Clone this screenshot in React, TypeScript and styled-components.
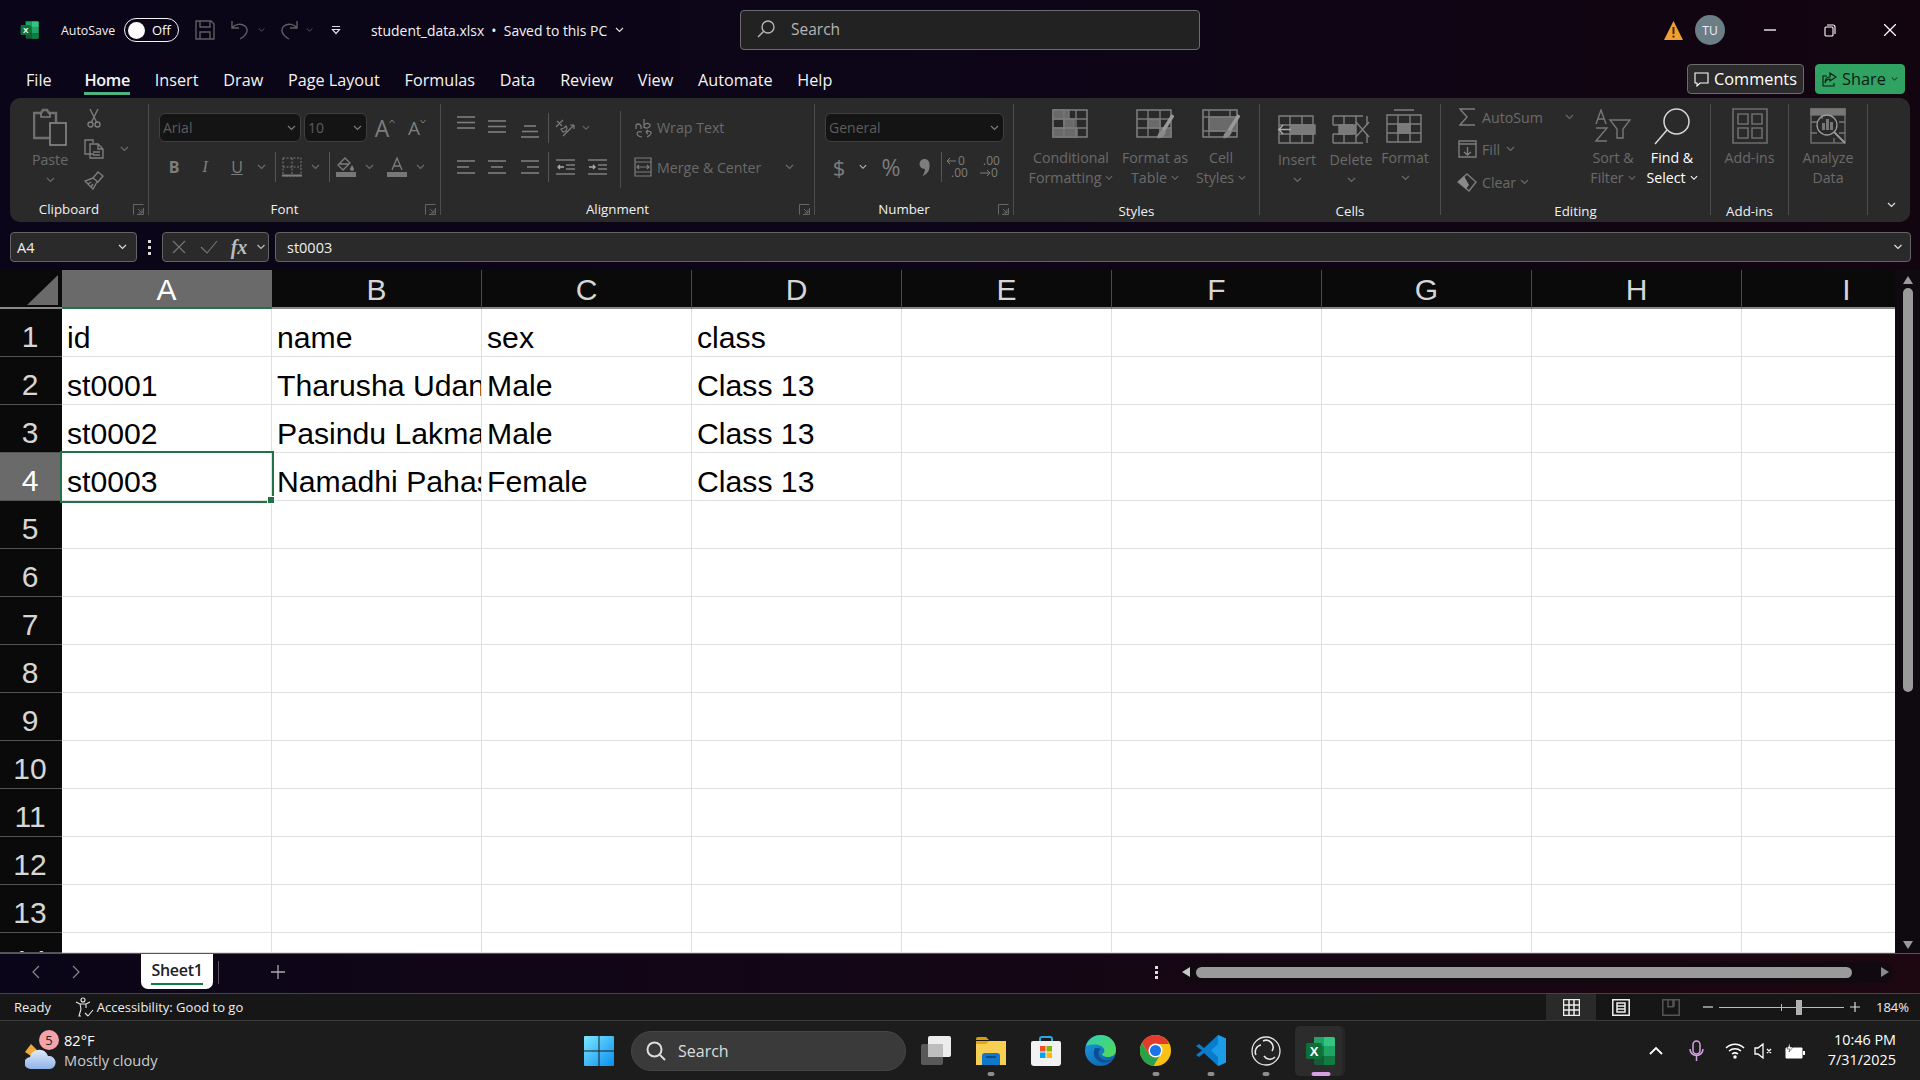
import React from "react";
import styled, { createGlobalStyle } from "styled-components";

const GlobalStyle = createGlobalStyle`
  html, body { margin: 0; padding: 0; background: #000; }
  body { width: 1920px; height: 1080px; overflow: hidden; font-family: "Open Sans", "Noto Sans", sans-serif; }
  * { box-sizing: border-box; }
`;

const DIM = "#7d7d7d";
const MUTED = "#6a6a6a";

const Window = styled.div`
  width: 1920px;
  height: 1080px;
  display: flex;
  flex-direction: column;
`;
const Top = styled.div`
  background: linear-gradient(90deg, #0b0519 0%, #0d0518 50%, #130510 100%);
  color: #fff;
`;
const TitleBar = styled.div`
  height: 60px;
  display: grid;
  grid-template-columns: 740px 460px 1fr;
  align-items: center;
`;
const Cluster = styled.div<{ $pad?: number; $end?: boolean }>`
  display: flex;
  align-items: center;
  padding-left: ${(p) => p.$pad || 0}px;
  justify-content: ${(p) => (p.$end ? "flex-end" : "flex-start")};
`;
const Slot = styled.div<{ $w: number; $ml?: number; $h?: number; $left?: boolean }>`
  width: ${(p) => p.$w}px;
  margin-left: ${(p) => p.$ml || 0}px;
  ${(p) => (p.$h ? `height: ${p.$h}px;` : "")}
  flex: none;
  display: flex;
  align-items: center;
  justify-content: ${(p) => (p.$left ? "flex-start" : "center")};
  white-space: nowrap;
`;
const Glyph = styled.svg<{ $c?: string; $sw?: number }>`
  fill: none;
  stroke: ${(p) => p.$c || DIM};
  stroke-width: ${(p) => p.$sw || 1.4};
  flex: none;
  display: block;
`;
const TitleText = styled.span<{ $size?: number }>`
  font-size: ${(p) => p.$size || 13.9}px;
  color: #f2f2f2;
`;
const Toggle = styled.div`
  width: 55px;
  height: 24px;
  border: 1.5px solid #f4f4f4;
  border-radius: 12px;
  display: flex;
  align-items: center;
  padding-left: 3px;
  gap: 7px;
  font-size: 13px;
`;
const Knob = styled.div`
  width: 17px;
  height: 17px;
  border-radius: 50%;
  background: #fff;
`;
const SearchBox = styled.div`
  height: 40px;
  background: #222;
  border: 1px solid #6c6c6c;
  border-radius: 4px;
  display: flex;
  align-items: center;
  padding: 0 0 2px 16px;
  gap: 16px;
  font-size: 15.5px;
  color: #b5b5b5;
`;
const Avatar = styled.div`
  width: 30px;
  height: 30px;
  border-radius: 50%;
  background: #6b7d85;
  font-size: 12px;
  display: flex;
  align-items: center;
  justify-content: center;
  color: #eef;
  margin: 0 15px 0 12px;
`;
const TabRow = styled.div`
  height: 38px;
  display: flex;
  padding: 0 15px 0 26px;
  gap: 24.8px;
`;
const Tab = styled.div<{ $active?: boolean }>`
  height: 35px;
  padding-top: 5px;
  font-size: 16.2px;
  line-height: 30px;
  white-space: nowrap;
  color: #f4f4f4;
  font-weight: ${(p) => (p.$active ? 600 : 400)};
  letter-spacing: ${(p) => (p.$active ? "-0.3px" : "0")};
  border-bottom: 3px solid ${(p) => (p.$active ? "#4fb27f" : "transparent")};
  margin-left: ${(p) => (p.$active ? 8 : 0)}px;
`;
const TabActions = styled.div`
  margin-left: auto;
  display: flex;
  gap: 11px;
  padding-top: 4px;
`;
const ActionBtn = styled.div<{ $green?: boolean }>`
  height: 30px;
  width: ${(p) => (p.$green ? 90 : 117)}px;
  border-radius: 4px;
  font-size: 16.3px;
  display: flex;
  align-items: center;
  justify-content: center;
  gap: 5px;
  color: ${(p) => (p.$green ? "#0b1a10" : "#fff")};
  background: ${(p) => (p.$green ? "#30a362" : "#2b2b2b")};
  border: 1px solid ${(p) => (p.$green ? "#30a362" : "#6c6c6c")};
`;
const Ribbon = styled.div`
  margin: 0 10px;
  height: 124px;
  background: #2a2a2a;
  border-radius: 10px;
  display: flex;
  padding: 6px 0 7px;
`;
const Group = styled.div<{ $w: number; $last?: boolean }>`
  width: ${(p) => p.$w}px;
  flex: none;
  height: 111px;
  display: flex;
  flex-direction: column;
  border-right: ${(p) => (p.$last ? "none" : "1px solid #4d4d4d")};
`;
const GroupBody = styled.div<{ $pl?: number }>`
  flex: 1;
  min-height: 0;
  display: flex;
  padding-left: ${(p) => p.$pl || 0}px;
`;
const GroupFoot = styled.div<{ $low?: boolean }>`
  height: 20px;
  flex: none;
  display: flex;
  align-items: center;
  margin-bottom: ${(p) => (p.$low ? -6 : -4)}px;
  font-size: 13.3px;
  color: #f0f0f0;
`;
const FootLabel = styled.div`
  flex: 1;
  text-align: center;
`;
const CollapseWrap = styled.div`
  flex: 1;
  display: flex;
  justify-content: flex-end;
  align-items: flex-end;
  padding: 0 12px 7px 0;
`;
const Launcher = styled.div`
  width: 20px;
  flex: none;
  display: flex;
  justify-content: center;
`;
const Large = styled.div<{ $w: number; $on?: boolean }>`
  width: ${(p) => p.$w}px;
  flex: none;
  display: flex;
  flex-direction: column;
  align-items: center;
  font-size: 14.2px;
  line-height: 20px;
  white-space: nowrap;
  color: ${(p) => (p.$on ? "#fff" : MUTED)};
`;
const LargeIcon = styled.div<{ $drop?: boolean }>`
  height: ${(p) => (p.$drop ? 46 : 44)}px;
  flex: none;
  display: flex;
  align-items: center;
  justify-content: center;
`;
const LargeLine = styled.div`
  height: 20px;
  display: flex;
  align-items: center;
  gap: 4px;
`;
const Stack = styled.div<{ $w?: number; $pt?: number; $gap?: number }>`
  display: flex;
  flex-direction: column;
  ${(p) => (p.$w ? `width: ${p.$w}px; flex: none;` : "")}
  padding-top: ${(p) => p.$pt || 0}px;
  gap: ${(p) => p.$gap || 0}px;
`;
const Row = styled.div<{ $h?: number; $w?: number }>`
  display: flex;
  align-items: center;
  height: ${(p) => p.$h || 30}px;
  ${(p) => (p.$w ? `width: ${p.$w}px;` : "")}
`;
const Select = styled.div<{ $w: number; $ml?: number }>`
  width: ${(p) => p.$w}px;
  height: 29px;
  margin-left: ${(p) => p.$ml || 0}px;
  background: #141414;
  border: 1px solid #3f3f3f;
  border-radius: 6px;
  color: #5c5c5c;
  font-size: 14px;
  display: flex;
  align-items: center;
  justify-content: space-between;
  padding: 0 4px 0 3px;
`;
const VRule = styled.div<{ $h?: number }>`
  width: 1px;
  height: ${(p) => p.$h || 30}px;
  background: #555;
  flex: none;
`;
const RuleBlock = styled.div`
  width: 1px;
  height: 77px;
  background: #4d4d4d;
  margin-top: 7px;
  flex: none;
`;
const SmallText = styled.span<{ $ml?: number }>`
  font-size: 14.2px;
  color: ${MUTED};
  margin-left: ${(p) => p.$ml || 0}px;
  white-space: nowrap;
`;
const BoldLetter = styled.span<{ $italic?: boolean; $bold?: boolean; $under?: boolean; $size?: number; $serif?: boolean; $light?: boolean }>`
  font-family: ${(p) => (p.$serif ? '"Liberation Serif", serif' : '"Open Sans", sans-serif')};
  font-size: ${(p) => p.$size || 14}px;
  font-weight: ${(p) => (p.$bold ? 700 : 400)};
  font-style: ${(p) => (p.$italic ? "italic" : "normal")};
  text-decoration: ${(p) => (p.$under ? "underline" : "none")};
  color: ${(p) => (p.$light ? "#bbb" : DIM)};
`;
const FormulaBar = styled.div`
  height: 48px;
  display: flex;
  align-items: center;
  padding: 2px 9px 0 10px;
  font-size: 14.5px;
  color: #eee;
`;
const FxBox = styled.div<{ $w?: number; $grow?: boolean; $ml?: number }>`
  height: 30px;
  background: #2a2a2a;
  border: 1px solid #646464;
  border-radius: 4px;
  display: flex;
  align-items: center;
  ${(p) => (p.$w ? `width: ${p.$w}px; flex: none;` : "")}
  ${(p) => (p.$grow ? "flex: 1;" : "")}
  margin-left: ${(p) => p.$ml || 0}px;
`;
const Dots = styled.div`
  width: 25px;
  flex: none;
  display: flex;
  flex-direction: column;
  align-items: center;
  gap: 3px;
`;
const Dot = styled.div`
  width: 3px;
  height: 3px;
  background: #ddd;
`;
const Sheet = styled.div`
  height: 683px;
  display: flex;
  background: #120a12;
`;
const SheetClip = styled.div`
  width: 1895px;
  flex: none;
  overflow: hidden;
  background: #fff;
`;
const Grid = styled.div`
  display: grid;
  grid-template-columns: 62px repeat(9, 210px);
  grid-template-rows: 39px repeat(13, 48px) 20px;
  width: 1952px;
  font-family: "Liberation Sans", Arial, sans-serif;
`;
const Corner = styled.div`
  background: #0a0a0a;
  border-bottom: 2px solid #8a8a8a;
  display: flex;
  align-items: flex-start;
  padding: 5px 0 0 27px;
`;
const ColHead = styled.div<{ $sel?: boolean }>`
  background: ${(p) => (p.$sel ? "#6a6a6a" : "#0a0a0a")};
  color: ${(p) => (p.$sel ? "#fff" : "#d6d6d6")};
  border-right: 1px solid ${(p) => (p.$sel ? "#6a6a6a" : "#4a4a4a")};
  border-bottom: 2px solid ${(p) => (p.$sel ? "#217346" : "#8a8a8a")};
  font-size: 30px;
  line-height: 39px;
  text-align: center;
`;
const RowHead = styled.div<{ $sel?: boolean }>`
  background: ${(p) => (p.$sel ? "#6a6a6a" : "#0a0a0a")};
  color: ${(p) => (p.$sel ? "#fff" : "#d6d6d6")};
  border-bottom: 1px solid #555;
  font-size: 30px;
  line-height: 47px;
  text-align: center;
  padding: 4px 2px 0 0;
  overflow: hidden;
`;
const Cell = styled.div<{ $sel?: boolean }>`
  background: #fff;
  color: #000;
  border-right: 1px solid #dfdfdf;
  border-bottom: 1px solid #dfdfdf;
  font-size: 30.2px;
  line-height: 47px;
  padding: 5px 0 0 5px;
  white-space: nowrap;
  overflow: hidden;
  ${(p) =>
    p.$sel &&
    `
    overflow: visible;
    position: relative;
    z-index: 2;
    outline: 2.5px solid #217346;
    &::after {
      content: "";
      position: absolute;
      right: -4px;
      bottom: -4px;
      width: 6px;
      height: 6px;
      background: #217346;
      border: 1px solid #fff;
    }
  `}
`;
const VScroll = styled.div`
  flex: 1;
  display: flex;
  flex-direction: column;
  align-items: center;
  padding: 6px 0 0;
  background: #0e0a10;
`;
const VThumb = styled.div`
  width: 10px;
  height: 404px;
  margin-top: 4px;
  background: #9a9a9a;
  border-radius: 5px;
`;
const SheetBar = styled.div`
  height: 41px;
  display: flex;
  align-items: center;
  padding-bottom: 3px;
  border-top: 1px solid #555;
  border-bottom: 1px solid #444;
  background: linear-gradient(90deg, #0b0519 0%, #150615 55%, #1d0710 100%);
`;
const SheetTab = styled.div`
  width: 72px;
  height: 35px;
  margin-left: 53px;
  align-self: flex-start;
  background: #fff;
  color: #222;
  font-size: 16px;
  font-weight: 600;
  border-radius: 0 0 7px 7px;
  display: flex;
  justify-content: center;
`;
const SheetTabText = styled.div`
  height: 31px;
  line-height: 33px;
  border-bottom: 2px solid #107c41;
  letter-spacing: -0.3px;
`;
const HTrack = styled.div`
  width: 711px;
  height: 21px;
  border-radius: 10px;
  background: #100a10;
  display: flex;
  align-items: center;
  margin-left: 15px;
  margin-right: 28px;
`;
const HThumb = styled.div`
  width: 656px;
  height: 11px;
  margin-left: 6px;
  border-radius: 6px;
  background: #9a9a9a;
`;
const StatusBar = styled.div`
  height: 26px;
  background: #161616;
  color: #eee;
  font-size: 13px;
  display: flex;
  align-items: center;
  padding-left: 14px;
`;
const ViewBtn = styled.div<{ $on?: boolean }>`
  width: 50px;
  height: 26px;
  background: ${(p) => (p.$on ? "#2a2a2a" : "transparent")};
  display: flex;
  align-items: center;
  justify-content: center;
  flex: none;
`;
const Slider = styled.div`
  width: 125px;
  height: 1px;
  background: #bbb;
  position: relative;
  flex: none;
`;
const SliderTick = styled.div`
  position: absolute;
  left: 62px;
  top: -3px;
  width: 1px;
  height: 7px;
  background: #bbb;
`;
const SliderThumb = styled.div`
  position: absolute;
  left: 77px;
  top: -7px;
  width: 6px;
  height: 15px;
  background: #b0b0b0;
`;
const Taskbar = styled.div`
  height: 60px;
  background: #1c1c1c;
  border-top: 1px solid #3a3a3a;
  display: flex;
  align-items: center;
  color: #fff;
`;
const Weather = styled.div`
  width: 584px;
  flex: none;
  padding-left: 25px;
  display: flex;
  align-items: center;
  gap: 8px;
  font-size: 14.6px;
  line-height: 20px;
  padding-bottom: 2px;
`;
const WeatherIcon = styled.div`
  position: relative;
  width: 31px;
  height: 40px;
  display: flex;
  align-items: flex-end;
`;
const Badge = styled.div`
  position: absolute;
  left: 14px;
  top: 0;
  width: 20px;
  height: 20px;
  border-radius: 50%;
  background: #f4a3ab;
  color: #222;
  font-size: 13px;
  line-height: 20px;
  text-align: center;
`;
const Sub = styled.div`
  color: #ccc;
`;
const TaskSearch = styled.div`
  width: 275px;
  height: 40px;
  flex: none;
  margin-left: 17px;
  border-radius: 20px;
  background: #3a3a3a;
  border: 1px solid #464646;
  display: flex;
  align-items: center;
  gap: 12px;
  padding-left: 14px;
  font-size: 16px;
  color: #ddd;
`;
const TaskItem = styled.div<{ $first?: boolean }>`
  position: relative;
  width: 55px;
  height: 50px;
  flex: none;
  margin-left: ${(p) => (p.$first ? 2 : 0)}px;
  display: flex;
  align-items: center;
  justify-content: center;
`;
const TaskActive = styled.div`
  position: absolute;
  left: 2px;
  right: 6px;
  top: 0;
  bottom: 0;
  border-radius: 5px;
  background: #2c2c2c;
  box-shadow: 3px 0 0 #262626;
`;
const TaskLogo = styled.div`
  position: relative;
  display: flex;
`;
const Pip = styled.div<{ $on?: boolean }>`
  position: absolute;
  bottom: 0;
  left: 50%;
  width: ${(p) => (p.$on ? 19 : 7)}px;
  height: 3.5px;
  border-radius: 2px;
  transform: translateX(-50%);
  background: ${(p) => (p.$on ? "#d7a0e2" : "#8d8d8d")};
`;
const Clock = styled.div`
  width: 80px;
  margin-left: auto;
  margin-right: 24px;
  padding-bottom: 2px;
  text-align: right;
  font-size: 14.4px;
  line-height: 20px;
  white-space: nowrap;
  display: flex;
  flex-direction: column;
  align-items: flex-end;
`;

const Chev = ({ c = DIM, w = 9 }: { c?: string; w?: number }) => (
  <Glyph width={w} height={6} viewBox="0 0 9 6" $c={c} $sw={1.2}>
    <path d="M1 1l3.5 3.5L8 1" />
  </Glyph>
);
const Corner45 = () => (
  <Glyph width={11} height={11} viewBox="0 0 11 11" $c="#666" $sw={1}>
    <path d="M.5 10.5V.5h10M5 5l4 4M9 5.5V9H5.5" />
    <path d="M10.500 4v6.500H4" />
  </Glyph>
);

function ExcelLogo({ size }: { size: number }) {
  return (
    <svg width={size} height={size} viewBox="0 0 32 32">
      <path d="M9 2h10v9H9z" fill="#21a366" />
      <path d="M19 2h9a2 2 0 0 1 2 2v7H19z" fill="#33c481" />
      <path d="M9 11h10v10H9z" fill="#107c41" />
      <path d="M19 11h11v10H19z" fill="#21a366" />
      <path d="M9 21h21v7a2 2 0 0 1-2 2H11a2 2 0 0 1-2-2z" fill="#185c37" />
      <path d="M19 21h11v7a2 2 0 0 1-2 2h-9z" fill="#107c41" />
      <rect x="1" y="8" width="16" height="16" rx="1.5" fill="#0e6f3b" />
      <text x="9" y="21" textAnchor="middle" fontSize="13" fontWeight="700" fontFamily="Liberation Sans" fill="#fff">X</text>
    </svg>
  );
}
const SaveIcon = () => (
  <Glyph width={20} height={20} viewBox="0 0 20 20" $c="#5f5f5f">
    <path d="M1 1h15l3 3v15H1zM5 1v6h10V1M5 19v-7h10v7" />
  </Glyph>
);
const UndoIcon = ({ flip }: { flip?: boolean }) => (
  <Glyph width={19} height={20} viewBox="0 0 19 20" $c="#5f5f5f" style={flip ? { transform: "scaleX(-1)" } : undefined}>
    <path d="M1 1v7h7M1 8c3-4 9-5 13-2 4 4 2 9-5 13" />
  </Glyph>
);
const SearchGlass = ({ c = "#b5b5b5", s = 18 }: { c?: string; s?: number }) => (
  <Glyph width={s} height={s} viewBox="0 0 18 18" $c={c}>
    <circle cx="11" cy="7" r="6" />
    <path d="M6.500 11.500L1 17" />
  </Glyph>
);
const PasteIcon = () => (
  <Glyph width={34} height={38} viewBox="0 0 34 38" $c="#7c7c7c" $sw={1.6}>
    <path d="M16 30H1V5h7l2-3h4l2 3h7v9" strokeWidth="2.500" stroke="#6f6f6f" />
    <path d="M8 5v4h9V5" />
    <rect x="17" y="15" width="16" height="22" stroke="#8a8a8a" />
  </Glyph>
);
const CutIcon = () => (
  <Glyph width={14} height={20} viewBox="0 0 14 20">
    <path d="M3 1l6.500 13M11 1L4.500 14" />
    <circle cx="3.500" cy="16.500" r="2.500" />
    <circle cx="10.500" cy="16.500" r="2.500" />
  </Glyph>
);
const CopyIcon = () => (
  <Glyph width={20} height={20} viewBox="0 0 20 20">
    <path d="M10 15H1V1h8v3" />
    <path d="M6 5h8l5 5v9H6zM14 5v5h5M9 13h7M9 16h7" />
  </Glyph>
);
const PainterIcon = () => (
  <Glyph width={20} height={19} viewBox="0 0 20 19">
    <path d="M14 1l5 4-5 6-5-4zM9 7L1 10l8 8 4-7" />
    <path d="M4 13l3-2M7 16l2-3" />
  </Glyph>
);
const BigA = ({ up, s }: { up: boolean; s: number }) => (
  <>
    <BoldLetter $size={s}>A</BoldLetter>
    <Glyph width={6} height={5} viewBox="0 0 6 5" $sw={1} style={{ marginBottom: 12 }}>
      <path d={up ? "M.5 4L3 1l2.500 3" : "M.5 1L3 4l2.500-3"} />
    </Glyph>
  </>
);
const BorderIcon = () => (
  <Glyph width={20} height={20} viewBox="0 0 20 20" $sw={1}>
    <path d="M1 1h18v18H1zM10 1v18M1 10h18" strokeDasharray="2 1.500" />
    <path d="M0 18.500h20" strokeWidth="2" />
  </Glyph>
);
const FillIcon = () => (
  <svg width={20} height={20} viewBox="0 0 20 20">
    <path d="M9 1l-7 7 5 5 7-7zM4 7h9" fill="none" stroke={DIM} strokeWidth="1.300" />
    <path d="M16 8c1 2 2 3 2 4a2 2 0 0 1-4 0c0-1 1-2 2-4z" fill={DIM} />
    <rect y="15" width="20" height="5" fill="#777" />
  </svg>
);
const FontColorIcon = () => (
  <svg width={20} height={20} viewBox="0 0 20 20">
    <path d="M5 13L10 1l5 12M6.500 9h7" fill="none" stroke={DIM} strokeWidth="1.300" />
    <rect y="15" width="20" height="5" fill="#777" />
  </svg>
);
const Lines = ({ ys, xs }: { ys: number[]; xs?: [number, number][] }) => (
  <Glyph width={18} height={24} viewBox="0 0 18 24" $sw={1.6}>
    {ys.map((y, i) => {
      const x = xs ? xs[i] : [0, 18];
      return <path key={y} d={`M${x[0]} ${y}H${x[1]}`} />;
    })}
  </Glyph>
);
const OrientIcon = () => (
  <Glyph width={20} height={20} viewBox="0 0 20 20" $sw={1.2}>
    <path d="M2 3l5 5M1 9l7-7M6 11l3-1 2-2 1 2-1 3-3 1zM8 18L19 7M19 7h-4M19 7v4" />
  </Glyph>
);
const IndentIcon = ({ inward }: { inward?: boolean }) => (
  <Glyph width={19} height={20} viewBox="0 0 19 20" $sw={1.4}>
    <path d="M0 3h19M10 8h9M10 12h9M0 17h19" />
    <path d={inward ? "M1 10h6M5 8l2 2-2 2" : "M2 10h6M4 8l-2 2 2 2"} stroke="#aaa" />
  </Glyph>
);
const WrapIcon = () => (
  <Glyph width={19} height={20} viewBox="0 0 19 20" $sw={1.2}>
    <path d="M7 8c-1-3-5-3-5 0v3M2 7c3-2 6 0 5 4M10 1v9M10 7c3-3 7-1 6 1s-4 3-6 1" />
    <path d="M8 14c-6-2-7 4 0 5M13 19c2-1 5-3 4-5-1-1-4-1-5 0M12 14l2-2M12 14l2 2" />
  </Glyph>
);
const MergeIcon = () => (
  <Glyph width={18} height={20} viewBox="0 0 18 20" $sw={1.2}>
    <path d="M1 1h16v18H1zM1 5h16M1 15h16M3 10h12M5 8l-2 2 2 2M13 8l2 2-2 2" />
  </Glyph>
);
const CommaIcon = () => (
  <svg width={11} height={17} viewBox="0 0 11 17">
    <circle cx="5.500" cy="5" r="5" fill={DIM} />
    <path d="M6 6h4.500c.5 5-2 9-7 11 2-3 3-6 2.500-11z" fill={DIM} />
  </svg>
);
const DecimalIcon = ({ more }: { more?: boolean }) => (
  <svg width={21} height={26} viewBox="0 0 21 26" fill={DIM} fontFamily="Open Sans" fontSize="12" overflow="visible">
    {more ? (
      <>
        <text x="11" y="11">0</text>
        <text x="4" y="23">.00</text>
        <path d="M0 7h9M3 4L0 7l3 3" fill="none" stroke={DIM} />
      </>
    ) : (
      <>
        <text x="4" y="11">.00</text>
        <text x="12" y="23">0</text>
        <path d="M1 19h10M8 16l3 3-3 3" fill="none" stroke={DIM} />
      </>
    )}
  </svg>
);
const TableBase = ({ children }: { children?: React.ReactNode }) => (
  <svg width={38} height={34} viewBox="0 0 38 34" fill="none" stroke="#7a7a7a" strokeWidth="1.400">
    <rect x="1" y="1" width="34" height="27" stroke="#878787" />
    {children}
  </svg>
);
const CondIcon = () => (
  <TableBase>
    <rect x="1" y="1" width="16" height="9" fill="#6a6a6a" />
    <rect x="12" y="10" width="10" height="9" fill="#6a6a6a" />
    <rect x="1" y="19" width="24" height="9" fill="#6a6a6a" />
    <path d="M12 1v27M24 1v27M1 10h34M1 19h34" />
  </TableBase>
);
const Brush = () => (
  <g>
    <path d="M37 6L27 22" stroke="#999" strokeWidth="3.500" />
    <path d="M27 21c-2 1-5 2-6 8 3 1 7-1 9-6z" fill="#8a8a8a" stroke="none" />
  </g>
);
const TableStyleIcon = () => (
  <TableBase>
    <rect x="12" y="10" width="12" height="9" fill="#6a6a6a" />
    <rect x="24" y="19" width="11" height="9" fill="#6a6a6a" />
    <path d="M12 1v27M24 1v27M1 10h34M1 19h34" />
    <Brush />
  </TableBase>
);
const CellStyleIcon = () => (
  <TableBase>
    <rect x="7" y="8" width="28" height="14" fill="#6a6a6a" />
    <path d="M1 8h34M7 1v27M1 22h34M28 1v7" />
    <Brush />
  </TableBase>
);
const CellsIcon = ({ kind }: { kind: "insert" | "delete" | "format" }) => (
  <svg width={38} height={34} viewBox="0 0 38 34" fill="none" stroke="#7f7f7f" strokeWidth="1.400">
    {kind === "insert" && (
      <>
        <path d="M1 6h34v27H1zM1 15h34M1 24h34M12 6v27M24 6v27" />
        <rect x="13" y="15" width="24" height="9" fill="#7a7a7a" />
        <path d="M0 19.500h13M5 15l-4 4.500 4 4.500" stroke="#aaa" />
      </>
    )}
    {kind === "delete" && (
      <>
        <path d="M1 6h30M1 33h30M1 6v9M1 24v9M1 15h20M1 24h20M12 6v27M24 6v9M24 24v9M35 6v9M35 24v9" />
        <rect x="7" y="15" width="17" height="9" fill="#7a7a7a" />
        <path d="M24 12l13 15M37 12L24 27" />
      </>
    )}
    {kind === "format" && (
      <>
        <path d="M8 1h20M1 6h34v27H1zM1 15h34M1 24h34M12 6v27M24 6v27" />
        <rect x="12" y="15" width="12" height="9" fill="#7a7a7a" />
      </>
    )}
  </svg>
);
const SigmaIcon = () => (
  <Glyph width={17} height={18} viewBox="0 0 17 18" $sw={1.4}>
    <path d="M16 1H1l7 8-7 8h15" />
  </Glyph>
);
const FillDownIcon = () => (
  <Glyph width={19} height={18} viewBox="0 0 19 18" $sw={1.4}>
    <path d="M1 1h17v16H1zM1 4h17M9.500 7v8M6 12l3.500 3 3.500-3" />
  </Glyph>
);
const EraserIcon = () => (
  <svg width={20} height={19} viewBox="0 0 20 19">
    <path d="M10 1l9 8-7 9-11-9z" fill="none" stroke={DIM} strokeWidth="1.400" />
    <path d="M1 9l6-6 5 9-3 4z" fill="#8a8a8a" />
  </svg>
);
const SortIcon = () => (
  <svg width={36} height={34} viewBox="0 0 36 34" fill="none" stroke="#777" strokeWidth="1.400">
    <path d="M1 15L6 1l5 14M3 10h6M1 19h11L1 32h11" />
    <path d="M15 11h20l-7 9v9h-6v-9z" />
  </svg>
);
const FindIcon = () => (
  <Glyph width={36} height={37} viewBox="0 0 36 37" $c="#d8d8d8" $sw={1.5}>
    <circle cx="22.500" cy="13.500" r="12.500" />
    <path d="M13 22L1 36" />
  </Glyph>
);
const AddinsIcon = () => (
  <Glyph width={36} height={36} viewBox="0 0 36 36" $c="#6d6d6d" $sw={1.6}>
    <path d="M1 1h34v34H1z" />
    <path d="M6 6h10v10H6zM20 6h10v10H20zM6 20h10v10H6zM20 20h10v10H20z" />
  </Glyph>
);
const AnalyzeIcon = () => (
  <svg width={36} height={36} viewBox="0 0 36 36" fill="none" stroke="#777" strokeWidth="1.300">
    <rect x="1" y="1" width="34" height="34" />
    <rect x="1" y="1" width="34" height="6" fill="#777" />
    <path d="M1 14h6M29 14h6M1 25h6M29 25h6M12 7v4M24 30v5" />
    <circle cx="17" cy="17" r="10" stroke="#999" />
    <path d="M24 24l11 11" stroke="#999" strokeWidth="1.800" />
    <path d="M12 15h3v7h-3zM16 11h3v11h-3zM20 14h3v8h-3z" fill="#777" stroke="none" />
  </svg>
);

const groupFoot = (label: string, launcher?: boolean, low?: boolean) => (
  <GroupFoot $low={low}>
    <FootLabel>{label}</FootLabel>
    {launcher && (
      <Launcher>
        <Corner45 />
      </Launcher>
    )}
  </GroupFoot>
);

function ClipboardGroup() {
  return (
    <Group $w={139}>
      <GroupBody $pl={17}>
        <Large $w={46}>
          <LargeIcon $drop>
            <PasteIcon />
          </LargeIcon>
          <LargeLine>Paste</LargeLine>
          <LargeLine>
            <Chev c={MUTED} />
          </LargeLine>
        </Large>
        <Stack>
          <Row $h={28}>
            <Slot $w={42}>
              <CutIcon />
            </Slot>
          </Row>
          <Row $h={34}>
            <Slot $w={42}>
              <CopyIcon />
            </Slot>
            <Slot $w={18}>
              <Chev c={MUTED} />
            </Slot>
          </Row>
          <Row $h={28}>
            <Slot $w={42}>
              <PainterIcon />
            </Slot>
          </Row>
        </Stack>
      </GroupBody>
      {groupFoot("Clipboard", true)}
    </Group>
  );
}

function FontGroup() {
  return (
    <Group $w={292}>
      <GroupBody $pl={10}>
        <Stack $pt={9} $gap={10}>
          <Row $h={29}>
            <Select $w={142}>
              Arial <Chev />
            </Select>
            <Select $w={63} $ml={3}>
              10 <Chev />
            </Select>
            <Slot $w={36}>
              <BigA up s={23} />
            </Slot>
            <Slot $w={28}>
              <BigA up={false} s={19} />
            </Slot>
          </Row>
          <Row>
            <Slot $w={30}>
              <BoldLetter $bold $size={16}>B</BoldLetter>
            </Slot>
            <Slot $w={32}>
              <BoldLetter $italic $serif $size={17}>I</BoldLetter>
            </Slot>
            <Slot $w={32}>
              <BoldLetter $under $size={16}>U</BoldLetter>
            </Slot>
            <Slot $w={16}>
              <Chev c={MUTED} />
            </Slot>
            <Slot $w={12}>
              <VRule />
            </Slot>
            <Slot $w={21}>
              <BorderIcon />
            </Slot>
            <Slot $w={27}>
              <Chev c={MUTED} />
            </Slot>
            <VRule />
            <Slot $w={32}>
              <FillIcon />
            </Slot>
            <Slot $w={14}>
              <Chev c={MUTED} />
            </Slot>
            <Slot $w={30} $ml={6}>
              <FontColorIcon />
            </Slot>
            <Slot $w={16}>
              <Chev c={MUTED} />
            </Slot>
          </Row>
        </Stack>
      </GroupBody>
      {groupFoot("Font", true)}
    </Group>
  );
}

function AlignmentGroup() {
  return (
    <Group $w={374}>
      <GroupBody $pl={8}>
        <Stack $pt={9} $gap={10} $w={171}>
          <Row $h={29}>
            <Slot $w={33}>
              <Lines ys={[1, 6.5, 12]} />
            </Slot>
            <Slot $w={30}>
              <Lines ys={[5, 10.5, 16]} />
            </Slot>
            <Slot $w={36}>
              <Lines ys={[10, 15.5, 21]} xs={[[3, 15], [1, 17], [0, 18]]} />
            </Slot>
            <VRule />
            <Slot $w={32}>
              <OrientIcon />
            </Slot>
            <Slot $w={10}>
              <Chev c={MUTED} w={8} />
            </Slot>
          </Row>
          <Row>
            <Slot $w={33}>
              <Lines ys={[6, 12, 18]} xs={[[0, 18], [0, 12], [0, 18]]} />
            </Slot>
            <Slot $w={30}>
              <Lines ys={[6, 12, 18]} xs={[[0, 18], [3, 15], [0, 18]]} />
            </Slot>
            <Slot $w={36}>
              <Lines ys={[6, 12, 18]} xs={[[0, 18], [6, 18], [0, 18]]} />
            </Slot>
            <VRule />
            <Slot $w={32}>
              <IndentIcon />
            </Slot>
            <Slot $w={32}>
              <IndentIcon inward />
            </Slot>
          </Row>
        </Stack>
        <RuleBlock />
        <Stack $pt={9} $gap={10}>
          <Row $h={29}>
            <Slot $w={24} $ml={10}>
              <WrapIcon />
            </Slot>
            <SmallText $ml={2}>Wrap Text</SmallText>
          </Row>
          <Row $w={186}>
            <Slot $w={24} $ml={10}>
              <MergeIcon />
            </Slot>
            <SmallText $ml={2}>Merge &amp; Center</SmallText>
            <Slot $w={36} style={{ marginLeft: "auto" }}>
              <Chev c={MUTED} />
            </Slot>
          </Row>
        </Stack>
      </GroupBody>
      {groupFoot("Alignment", true)}
    </Group>
  );
}

function NumberGroup() {
  return (
    <Group $w={199}>
      <GroupBody $pl={10}>
        <Stack $pt={9} $gap={10}>
          <Row $h={29}>
            <Select $w={179}>
              General <Chev />
            </Select>
          </Row>
          <Row>
            <Slot $w={28}>
              <BoldLetter $size={22}>$</BoldLetter>
            </Slot>
            <Slot $w={20}>
              <Chev c="#bbb" w={8} />
            </Slot>
            <Slot $w={36}>
              <BoldLetter $size={23}>%</BoldLetter>
            </Slot>
            <Slot $w={30}>
              <CommaIcon />
            </Slot>
            <Slot $w={4}>
              <VRule />
            </Slot>
            <Slot $w={28}>
              <DecimalIcon more />
            </Slot>
            <Slot $w={36}>
              <DecimalIcon />
            </Slot>
          </Row>
        </Stack>
      </GroupBody>
      {groupFoot("Number", true)}
    </Group>
  );
}

function BigButton({
  w,
  icon,
  lines,
  chev,
  on,
}: {
  w: number;
  icon: React.ReactNode;
  lines: string[];
  chev?: boolean;
  on?: boolean;
}) {
  return (
    <Large $w={w} $on={on}>
      <LargeIcon>{icon}</LargeIcon>
      {lines.map((l, i) => (
        <LargeLine key={l}>
          {l}
          {chev && i === lines.length - 1 && <Chev c={on ? "#fff" : MUTED} w={8} />}
        </LargeLine>
      ))}
    </Large>
  );
}

function Ribbons() {
  return (
    <Ribbon>
      <ClipboardGroup />
      <FontGroup />
      <AlignmentGroup />
      <NumberGroup />
      <Group $w={246}>
        <GroupBody $pl={16}>
          <BigButton w={82} icon={<CondIcon />} lines={["Conditional", "Formatting"]} chev />
          <BigButton w={86} icon={<TableStyleIcon />} lines={["Format as", "Table"]} chev />
          <BigButton w={46} icon={<CellStyleIcon />} lines={["Cell", "Styles"]} chev />
        </GroupBody>
        {groupFoot("Styles", false, true)}
      </Group>
      <Group $w={181}>
        <GroupBody $pl={10}>
          <Large $w={54}>
            <LargeIcon $drop>
              <CellsIcon kind="insert" />
            </LargeIcon>
            <LargeLine>Insert</LargeLine>
            <LargeLine>
              <Chev c={MUTED} />
            </LargeLine>
          </Large>
          <Large $w={54}>
            <LargeIcon $drop>
              <CellsIcon kind="delete" />
            </LargeIcon>
            <LargeLine>Delete</LargeLine>
            <LargeLine>
              <Chev c={MUTED} />
            </LargeLine>
          </Large>
          <Large $w={54}>
            <LargeIcon>
              <CellsIcon kind="format" />
            </LargeIcon>
            <LargeLine>Format</LargeLine>
            <LargeLine>
              <Chev c={MUTED} />
            </LargeLine>
          </Large>
        </GroupBody>
        {groupFoot("Cells", false, true)}
      </Group>
      <Group $w={270}>
        <GroupBody $pl={15}>
          <Stack $w={129} $gap={5}>
            <Row $h={26}>
              <Slot $w={22}>
                <SigmaIcon />
              </Slot>
              <SmallText $ml={4}>AutoSum</SmallText>
              <Slot $w={18} style={{ marginLeft: "auto", marginRight: 7 }}>
                <Chev c={MUTED} />
              </Slot>
            </Row>
            <Row $h={28}>
              <Slot $w={22}>
                <FillDownIcon />
              </Slot>
              <SmallText $ml={4}>Fill</SmallText>
              <Slot $w={16} $ml={2}>
                <Chev c={MUTED} />
              </Slot>
            </Row>
            <Row $h={28}>
              <Slot $w={22}>
                <EraserIcon />
              </Slot>
              <SmallText $ml={4}>Clear</SmallText>
              <Slot $w={16}>
                <Chev c={MUTED} />
              </Slot>
            </Row>
          </Stack>
          <BigButton w={56} icon={<SortIcon />} lines={["Sort &", "Filter"]} chev />
          <BigButton w={62} icon={<FindIcon />} lines={["Find &", "Select"]} chev on />
        </GroupBody>
        {groupFoot("Editing", false, true)}
      </Group>
      <Group $w={78}>
        <GroupBody>
          <BigButton w={77} icon={<AddinsIcon />} lines={["Add-ins"]} />
        </GroupBody>
        {groupFoot("Add-ins", false, true)}
      </Group>
      <Group $w={79}>
        <GroupBody>
          <BigButton w={78} icon={<AnalyzeIcon />} lines={["Analyze", "Data"]} />
        </GroupBody>
      </Group>
      <Group $w={42} $last>
        <CollapseWrap>
          <Chev c="#ddd" w={13} />
        </CollapseWrap>
      </Group>
    </Ribbon>
  );
}

const COLS = ["A", "B", "C", "D", "E", "F", "G", "H", "I"];
const DATA: string[][] = [
  ["id", "name", "sex", "class"],
  ["st0001", "Tharusha Udana", "Male", "Class 13"],
  ["st0002", "Pasindu Lakmal", "Male", "Class 13"],
  ["st0003", "Namadhi Pahasara", "Female", "Class 13"],
];

function SheetGrid() {
  const rows = Array.from({ length: 14 }, (_, i) => i);
  return (
    <SheetClip>
      <Grid>
        <Corner>
          <svg width={31} height={30} viewBox="0 0 31 30">
            <polygon points="31,0 31,30 0,30" fill="#6a6a6a" />
          </svg>
        </Corner>
        {COLS.map((c) => (
          <ColHead key={c} $sel={c === "A"}>
            {c}
          </ColHead>
        ))}
        {rows.map((r) => (
          <React.Fragment key={r}>
            <RowHead $sel={r === 3}>{r + 1}</RowHead>
            {COLS.map((c, ci) => (
              <Cell key={c} $sel={r === 3 && ci === 0}>
                {DATA[r]?.[ci] ?? ""}
              </Cell>
            ))}
          </React.Fragment>
        ))}
      </Grid>
    </SheetClip>
  );
}

const Triangle = ({ dir, c = "#9a9a9a" }: { dir: "up" | "down" | "left" | "right"; c?: string }) => {
  const pts = { up: "5,0 10,8 0,8", down: "0,0 10,0 5,8", left: "8,0 8,10 0,5", right: "0,0 8,5 0,10" }[dir];
  const horizontal = dir === "left" || dir === "right";
  return (
    <svg width={horizontal ? 8 : 10} height={horizontal ? 10 : 8} viewBox={horizontal ? "0 0 8 10" : "0 0 10 8"}>
      <polygon points={pts} fill={c} />
    </svg>
  );
};

const StartIcon = () => (
  <svg width={30} height={30} viewBox="0 0 30 30">
    <defs>
      <linearGradient id="st" x1="0" y1="0" x2="1" y2="1">
        <stop offset="0" stopColor="#7be7ff" />
        <stop offset="1" stopColor="#0a8ef0" />
      </linearGradient>
    </defs>
    <path d="M0 1a1 1 0 0 1 1-1h13.500v14.500H0zM15.500 0H29a1 1 0 0 1 1 1v13.500H15.500zM0 15.500h14.500V30H1a1 1 0 0 1-1-1zM15.500 15.500H30V29a1 1 0 0 1-1 1H15.500z" fill="url(#st)" />
  </svg>
);
const TaskViewIcon = () => (
  <svg width={30} height={30} viewBox="0 0 30 30">
    <rect x="0" y="8" width="22" height="21" rx="2" fill="#585858" />
    <rect x="7" y="0" width="23" height="21" rx="2" fill="#ececec" />
    <rect x="7" y="8" width="15" height="13" fill="#bdbdbd" />
  </svg>
);
const ExplorerIcon = () => (
  <svg width={30} height={30} viewBox="0 0 30 30">
    <path d="M0 3a2 2 0 0 1 2-2h8l3 3h-13z" fill="#d99a0b" />
    <path d="M0 5h30v24H0z" fill="#f7cf52" />
    <path d="M0 5h13l-3 3H0z" fill="#e2a713" />
    <path d="M6 20a3 3 0 0 1 3-3h12a3 3 0 0 1 3 3v9H6z" fill="#0f78c9" />
    <path d="M10 21h10" stroke="#0b3c75" strokeWidth="1.500" />
  </svg>
);
const StoreIcon = () => (
  <svg width={30} height={32} viewBox="0 0 30 32">
    <path d="M9 7V4a2 2 0 0 1 2-2h8a2 2 0 0 1 2 2v3" fill="none" stroke="#29a8e0" strokeWidth="2" />
    <path d="M0 8a2 2 0 0 1 2-2h26a2 2 0 0 1 2 2v20a3 3 0 0 1-3 3H3a3 3 0 0 1-3-3z" fill="#f2f2f2" />
    <rect x="9" y="11" width="5.500" height="5.500" fill="#f25022" />
    <rect x="15.500" y="11" width="5.500" height="5.500" fill="#7fba00" />
    <rect x="9" y="17.500" width="5.500" height="5.500" fill="#00a4ef" />
    <rect x="15.500" y="17.500" width="5.500" height="5.500" fill="#ffb900" />
  </svg>
);
const EdgeIcon = () => (
  <svg width={31} height={31} viewBox="0 0 31 31">
    <defs>
      <linearGradient id="eg" x1="0" y1="0" x2="1" y2="1">
        <stop offset="0" stopColor="#2ed0b0" />
        <stop offset="1" stopColor="#55d955" />
      </linearGradient>
      <linearGradient id="eb" x1="0" y1="0" x2="1" y2="1">
        <stop offset="0" stopColor="#1b9de2" />
        <stop offset="1" stopColor="#0c59a4" />
      </linearGradient>
    </defs>
    <circle cx="15.500" cy="15.500" r="15.500" fill="url(#eb)" />
    <path d="M1 11C3 4 9 0 15.500 0 24 0 31 6 31 15c0 5-4 7-8 7-3 0-6-1-6-3 2-1 3-3 2-5-2-4-9-6-18-3z" fill="url(#eg)" />
    <path d="M10 13c-3 6 0 12 6 14 4 1 9 0 12-3-6 3-13 1-14-4-1-3 0-5 2-6-2-1-4-1-6-1z" fill="#0b4f92" />
  </svg>
);
const ChromeIcon = () => (
  <svg width={31} height={31} viewBox="0 0 31 31">
    <circle cx="15.500" cy="15.500" r="15.500" fill="#fbc116" />
    <path d="M15.500 0A15.500 15.500 0 0 0 2 7.800l6.800 11.700L15.500 9h13.600A15.500 15.500 0 0 0 15.500 0z" fill="#e33b2e" />
    <path d="M2 7.800A15.500 15.500 0 0 0 13.500 30.900l6.800-11.400H8.800z" fill="#2aa24a" />
    <circle cx="15.500" cy="15.500" r="7" fill="#fff" />
    <circle cx="15.500" cy="15.500" r="5.500" fill="#1a73e8" />
  </svg>
);
const VsCodeIcon = () => (
  <svg width={30} height={31} viewBox="0 0 30 31">
    <path d="M22 0l8 3.500v24L22 31 8 18l-5 4-3-2 6-4.500L0 11l3-2 5 4z" fill="#0a7ccc" />
    <path d="M22 0l8 3.500v24L22 31V22l-7-6.500L22 9z" fill="#1c9be8" />
  </svg>
);
const ObsIcon = () => (
  <svg width={30} height={30} viewBox="0 0 30 30" fill="none" stroke="#e6e6e6">
    <circle cx="15" cy="15" r="14" fill="#222" strokeWidth="1.300" />
    <path d="M12 5a7 7 0 0 1 9 10M24 21a7 7 0 0 1-11-1M5 19a7 7 0 0 1 5-10" strokeWidth="1.600" />
  </svg>
);
const WeatherArt = () => (
  <svg width={31} height={26} viewBox="0 0 31 26">
    <defs>
      <linearGradient id="cl" x1="0" y1="0" x2="0" y2="1">
        <stop offset="0" stopColor="#dfeaf8" />
        <stop offset="1" stopColor="#8fb3ea" />
      </linearGradient>
    </defs>
    <path d="M0 8l6-8 6 6-6 6z" fill="#f0a93a" />
    <path d="M6 25a6 6 0 0 1-1-12c1-5 6-8 11-7 3 0 6 3 7 6a6.500 6.500 0 0 1 2 13z" fill="url(#cl)" />
  </svg>
);

export default function App() {
  return (
    <Window>
      <GlobalStyle />
      <Top>
        <TitleBar>
          <Cluster $pad={20}>
            <ExcelLogo size={20} />
            <Slot $w={63} $ml={21} $left>
              <TitleText $size={12.4}>AutoSave</TitleText>
            </Slot>
            <Toggle>
              <Knob />
              Off
            </Toggle>
            <Slot $w={20} $ml={16}>
              <SaveIcon />
            </Slot>
            <Slot $w={19} $ml={16}>
              <UndoIcon />
            </Slot>
            <Slot $w={12} $ml={5}>
              <Chev c="#5f5f5f" w={7} />
            </Slot>
            <Slot $w={19} $ml={12}>
              <UndoIcon flip />
            </Slot>
            <Slot $w={12} $ml={5}>
              <Chev c="#5f5f5f" w={7} />
            </Slot>
            <Slot $w={12} $ml={15}>
              <Glyph width={10} height={10} viewBox="0 0 10 10" $c="#ddd" $sw={1.2}>
                <path d="M1 1.500h8M1.500 4.500L5 8.500l3.500-4z" />
              </Glyph>
            </Slot>
            <Slot $w={270} $ml={29} $left>
              <TitleText>student_data.xlsx&nbsp; •&nbsp; Saved to this PC</TitleText>
              <Slot $w={24}>
                <Chev c="#ddd" w={13} />
              </Slot>
            </Slot>
          </Cluster>
          <SearchBox>
            <SearchGlass />
            Search
          </SearchBox>
          <Cluster $end>
            <svg width={19} height={19} viewBox="0 0 19 19">
              <polygon points="9.500,0 19,19 0,19" fill="#f0a030" />
              <rect x="8.500" y="6" width="2" height="7" fill="#4a2a05" />
              <rect x="8.500" y="14.500" width="2" height="2" fill="#4a2a05" />
            </svg>
            <Avatar>TU</Avatar>
            <Slot $w={60}>
              <Glyph width={12} height={2} viewBox="0 0 12 2" $c="#fff" $sw={1.3}>
                <path d="M0 1h12" />
              </Glyph>
            </Slot>
            <Slot $w={60}>
              <Glyph width={12} height={13} viewBox="0 0 12 13" $c="#fff" $sw={1.1}>
                <path d="M1 4a1 1 0 0 1 1-1h6a1 1 0 0 1 1 1v7a1 1 0 0 1-1 1H2a1 1 0 0 1-1-1zM3 1h6a2 2 0 0 1 2 2v7" />
              </Glyph>
            </Slot>
            <Slot $w={60}>
              <Glyph width={12} height={12} viewBox="0 0 12 12" $c="#fff" $sw={1.3}>
                <path d="M0 0l12 12M12 0L0 12" />
              </Glyph>
            </Slot>
          </Cluster>
        </TitleBar>
        <TabRow>
          {["File", "Home", "Insert", "Draw", "Page Layout", "Formulas", "Data", "Review", "View", "Automate", "Help"].map((t) => (
            <Tab key={t} $active={t === "Home"}>
              {t}
            </Tab>
          ))}
          <TabActions>
            <ActionBtn>
              <Glyph width={15} height={15} viewBox="0 0 15 15" $c="#fff" $sw={1.1}>
                <path d="M1 1h13v10H6l-3 3v-3H1z" />
              </Glyph>
              Comments
            </ActionBtn>
            <ActionBtn $green>
              <Glyph width={15} height={15} viewBox="0 0 15 15" $c="#0b1a10" $sw={1.1}>
                <path d="M5 4H1v10h11v-3M8 1l6 4-6 4V7C6 7 4 8 3 11c0-4 2-6 5-6z" />
              </Glyph>
              Share
              <Chev c="#0b1a10" w={7} />
            </ActionBtn>
          </TabActions>
        </TabRow>
        <Ribbons />
        <FormulaBar>
          <FxBox $w={127}>
            <Slot $w={96} $left $ml={6}>
              A4
            </Slot>
            <Slot $w={18}>
              <Chev c="#ddd" w={11} />
            </Slot>
          </FxBox>
          <Dots>
            <Dot />
            <Dot />
            <Dot />
          </Dots>
          <FxBox $w={107}>
            <Slot $w={30} $ml={1}>
              <Glyph width={14} height={14} viewBox="0 0 14 14" $c="#777" $sw={1.1}>
                <path d="M1 1l12 12M13 1L1 13" />
              </Glyph>
            </Slot>
            <Slot $w={30}>
              <Glyph width={18} height={14} viewBox="0 0 18 14" $c="#777" $sw={1.1}>
                <path d="M1 7l6 6L17 1" />
              </Glyph>
            </Slot>
            <Slot $w={30}>
              <BoldLetter $italic $serif $bold $light $size={20}>
                fx
              </BoldLetter>
            </Slot>
            <Slot $w={14}>
              <Chev c="#bbb" w={10} />
            </Slot>
          </FxBox>
          <FxBox $grow $ml={6}>
            <Slot $w={100} $ml={11} $left>
              st0003
            </Slot>
            <Slot $w={20} style={{ marginLeft: "auto", marginRight: 2 }}>
              <Chev c="#ddd" w={12} />
            </Slot>
          </FxBox>
        </FormulaBar>
      </Top>
      <Sheet>
        <SheetGrid />
        <VScroll>
          <Triangle dir="up" />
          <VThumb />
          <Slot $w={10} $h={16} style={{ marginTop: "auto" }}>
            <Triangle dir="down" />
          </Slot>
        </VScroll>
      </Sheet>
      <SheetBar>
        <Slot $w={56} $ml={8}>
          <Glyph width={8} height={14} viewBox="0 0 8 14" $c="#888" $sw={1.2}>
            <path d="M7 1L1 7l6 6" />
          </Glyph>
        </Slot>
        <Slot $w={24}>
          <Glyph width={8} height={14} viewBox="0 0 8 14" $c="#888" $sw={1.2}>
            <path d="M1 1l6 6-6 6" />
          </Glyph>
        </Slot>
        <SheetTab>
          <SheetTabText>Sheet1</SheetTabText>
        </SheetTab>
        <Slot $w={1} $ml={5}>
          <VRule $h={23} />
        </Slot>
        <Slot $w={40} $ml={39}>
          <Glyph width={14} height={14} viewBox="0 0 14 14" $c="#aaa" $sw={1.3}>
            <path d="M7 0v14M0 7h14" />
          </Glyph>
        </Slot>
        <Slot $w={20} style={{ marginLeft: "auto" }}>
          <Stack $gap={2}>
            <Dot />
            <Dot />
            <Dot />
          </Stack>
        </Slot>
        <HTrack>
          <Slot $w={9}>
            <Triangle dir="left" c="#c8c8c8" />
          </Slot>
          <HThumb />
          <Slot $w={10} style={{ marginLeft: "auto", marginRight: 2 }}>
            <Triangle dir="right" c="#8a8a8a" />
          </Slot>
        </HTrack>
      </SheetBar>
      <StatusBar>
        <Slot $w={50} $left>
          Ready
        </Slot>
        <Slot $w={22} $ml={10}>
          <Glyph width={22} height={20} viewBox="0 0 20 20" $c="#e8e8e8" $sw={1.1}>
            <circle cx="8" cy="3" r="2" />
            <path d="M1 5l4 2h6l4-2M5 7l1 5-2 7h2M11 7v4M13 19l-3-3M13 19l5-6" />
          </Glyph>
        </Slot>
        <Slot $w={148}>Accessibility: Good to go</Slot>
        <Cluster style={{ marginLeft: "auto", paddingRight: 13 }}>
          <ViewBtn $on>
            <Glyph width={17} height={17} viewBox="0 0 17 17" $c="#eee" $sw={1.5}>
              <path d="M.5.500h16v16H.5zM6 .5v16M11 .5v16M.5 6h16M.5 11h16" />
            </Glyph>
          </ViewBtn>
          <ViewBtn>
            <Glyph width={18} height={17} viewBox="0 0 18 17" $c="#eee" $sw={1.5}>
              <path d="M.8.800h16.400v15.400H.8zM5 4h8v9H5zM5 7h8M5 10h8" />
            </Glyph>
          </ViewBtn>
          <ViewBtn>
            <Glyph width={18} height={17} viewBox="0 0 18 17" $c="#555" $sw={1.5}>
              <path d="M.8.800h16.400v15.400H.8zM6 .8v7h5v-7M12 .8v7" />
            </Glyph>
          </ViewBtn>
          <Slot $w={23}>
            <Glyph width={10} height={2} viewBox="0 0 10 2" $c="#ddd" $sw={1.2}>
              <path d="M0 1h10" />
            </Glyph>
          </Slot>
          <Slider>
            <SliderTick />
            <SliderThumb />
          </Slider>
          <Slot $w={22}>
            <Glyph width={10} height={10} viewBox="0 0 10 10" $c="#ddd" $sw={1.2}>
              <path d="M5 0v10M0 5h10" />
            </Glyph>
          </Slot>
          <Slot $w={31} $ml={10} $left>
            184%
          </Slot>
        </Cluster>
      </StatusBar>
      <Taskbar>
        <Weather>
          <WeatherIcon>
            <WeatherArt />
            <Badge>5</Badge>
          </WeatherIcon>
          <div>
            82°F
            <Sub>Mostly cloudy</Sub>
          </div>
        </Weather>
        <StartIcon />
        <TaskSearch>
          <Glyph width={20} height={20} viewBox="0 0 20 20" $c="#ddd" $sw={2}>
            <circle cx="8.500" cy="8.500" r="7" />
            <path d="M14 14l5 5" />
          </Glyph>
          Search
        </TaskSearch>
        <TaskItem $first>
          <TaskViewIcon />
        </TaskItem>
        <TaskItem>
          <ExplorerIcon />
          <Pip />
        </TaskItem>
        <TaskItem>
          <StoreIcon />
        </TaskItem>
        <TaskItem>
          <EdgeIcon />
        </TaskItem>
        <TaskItem>
          <ChromeIcon />
          <Pip />
        </TaskItem>
        <TaskItem>
          <VsCodeIcon />
          <Pip />
        </TaskItem>
        <TaskItem>
          <ObsIcon />
          <Pip />
        </TaskItem>
        <TaskItem>
          <TaskActive />
          <TaskLogo>
            <ExcelLogo size={32} />
          </TaskLogo>
          <Pip $on />
        </TaskItem>
        <Slot $w={40} $ml={288}>
          <Glyph width={14} height={9} viewBox="0 0 14 9" $c="#fff" $sw={1.8}>
            <path d="M1 8l6-6 6 6" />
          </Glyph>
        </Slot>
        <Slot $w={40}>
          <Glyph width={15} height={21} viewBox="0 0 15 21" $c="#d7a0e2" $sw={1.5}>
            <rect x="4" y="1" width="7" height="13" rx="3.500" />
            <path d="M1 9a6.500 6.500 0 0 0 13 0M7.500 16v5" />
          </Glyph>
        </Slot>
        <Slot $w={36} $ml={1}>
          <Glyph width={20} height={16} viewBox="0 0 20 16" $c="#fff" $sw={1.5}>
            <path d="M1 5c5-5 13-5 18 0M4 8c3.500-3 8.500-3 12 0M7 11c2-1.500 4-1.500 6 0" />
            <circle cx="10" cy="14" r="1" fill="#fff" />
          </Glyph>
        </Slot>
        <Slot $w={22}>
          <Glyph width={20} height={16} viewBox="0 0 20 16" $c="#fff" $sw={1.3}>
            <path d="M1 5h3l5-4v14l-5-4H1zM13 6l4 4M17 6l-4 4" />
          </Glyph>
        </Slot>
        <Slot $w={40}>
          <svg width={20} height={16} viewBox="0 0 20 16">
            <path d="M1 5h16v10H1z" fill="#fff" stroke="#fff" />
            <rect x="18" y="8" width="2" height="4" fill="#fff" />
            <path d="M5 0L2 6h3l-1 3 4-5H5z" fill="#fff" stroke="#1c1c1c" strokeWidth="0.500" />
          </svg>
        </Slot>
        <Clock>
          <span>10:46 PM</span>
          <span>7/31/2025</span>
        </Clock>
      </Taskbar>
    </Window>
  );
}
